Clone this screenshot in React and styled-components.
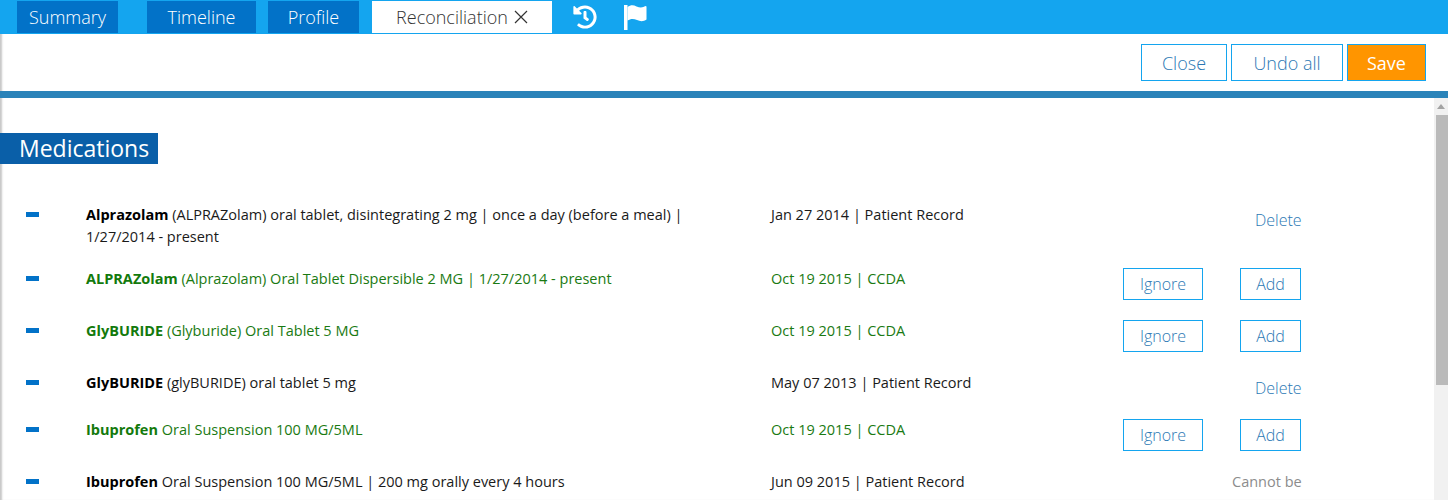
import React from "react";
import styled, { createGlobalStyle } from "styled-components";
import { FaHistory } from "react-icons/fa";

const GlobalStyle = createGlobalStyle`
  html, body {
    margin: 0;
    height: 500px;
    overflow: hidden;
    background: #fff;
    font-family: "Open Sans", "Liberation Sans", sans-serif;
  }
`;

const Page = styled.div`
  width: 1448px;
  height: 500px;
  overflow: hidden;
  display: flex;
  flex-direction: column;
  background: #fff;
  box-shadow: inset 3px 0 2px -1px #c8c8c8;
`;

const TopBar = styled.div`
  height: 34px;
  flex: none;
  background: #14a5ef;
  display: flex;
  align-items: flex-start;
  padding: 1px 0 0 17px;
  box-sizing: border-box;
`;

const Tab = styled.div`
  width: ${(p) => p.$width}px;
  height: 32px;
  margin-right: ${(p) => p.$gap}px;
  background: #0272c8;
  color: #fff;
  font-weight: 300;
  font-size: 18px;
  line-height: 32px;
  text-align: center;
`;

const ActiveTab = styled.div`
  width: 180px;
  height: 32px;
  margin-right: 21px;
  background: #fff;
  color: #333;
  font-weight: 300;
  font-size: 18px;
  line-height: 33px;
  display: flex;
  align-items: center;
  justify-content: center;
  gap: 6px;
`;

const IconButton = styled.div`
  height: 32px;
  margin-right: ${(p) => p.$gap || 0}px;
  display: flex;
  align-items: center;
  color: #fff;
`;

const Toolbar = styled.div`
  height: 57px;
  flex: none;
  display: flex;
  justify-content: flex-end;
  align-items: flex-start;
  gap: 4px;
  padding: 10px 22px 0 0;
  box-sizing: border-box;
  border-bottom: 0;
`;

const ToolButton = styled.button`
  height: 37px;
  width: ${(p) => p.$width}px;
  padding: 0;
  box-sizing: border-box;
  border: 1px solid #14a5ef;
  background: ${(p) => (p.$primary ? "#ff9500" : "#fff")};
  color: ${(p) => (p.$primary ? "#fff" : "#2b78b4")};
  font-family: inherit;
  font-weight: ${(p) => (p.$primary ? 400 : 300)};
  font-size: 18px;
`;

const Divider = styled.div`
  height: 7px;
  flex: none;
  background: #2a83b9;
`;

const Body = styled.div`
  flex: 1;
  min-height: 0;
  display: flex;
`;

const Content = styled.div`
  flex: 1;
  overflow: hidden;
  padding-top: 35px;
`;

const Heading = styled.h2`
  width: 158px;
  height: 31px;
  margin: 0 0 40px;
  padding-left: 19px;
  box-sizing: border-box;
  background: #0a5fa8;
  color: #fff;
  font-weight: 400;
  font-size: 23px;
  line-height: 31px;
`;

const Row = styled.div`
  display: grid;
  grid-template-columns: 86px 685px 352px 117px 1fr;
  padding-bottom: 20px;
  font-size: 14.5px;
  line-height: 22px;
  color: ${(p) => (p.$incoming ? "#1a7a12" : "#1a1a1a")};
`;

const MinusCell = styled.div`
  padding: 8px 0 0 26px;
`;

const Minus = styled.div`
  width: 13px;
  height: 5px;
  background: #0272c8;
`;

const Description = styled.div`
  padding-right: 30px;
`;

const Name = styled.strong`
  font-weight: 700;
  color: ${(p) => (p.$incoming ? "#137a0c" : "#000")};
`;

const ActionButton = styled.button`
  height: 32px;
  width: ${(p) => p.$width}px;
  padding: 0;
  box-sizing: border-box;
  border: 1px solid #14a5ef;
  background: #fff;
  color: #2b78b4;
  font-family: inherit;
  font-weight: 300;
  font-size: 16px;
`;

const DeleteLink = styled.a`
  display: block;
  padding: 5px 0 0 15px;
  color: #2b78b4;
  font-weight: 300;
  font-size: 16px;
`;

const Disabled = styled.div`
  color: #8c8c8c;
  font-size: 14.5px;
  padding-left: -8px;
  margin-left: -8px;
`;

const ScrollTrack = styled.div`
  width: 14px;
  flex: none;
  background: #f1f1f1;
  display: flex;
  flex-direction: column;
  align-items: flex-end;
`;

const ScrollArrow = styled.div`
  height: 17px;
  width: 14px;
  display: flex;
  align-items: center;
  justify-content: center;
`;

const ScrollThumb = styled.div`
  width: 12px;
  height: 270px;
  background: #bababa;
`;

const FlagIcon = () => (
  <svg width="24" height="26" viewBox="0 0 24 26" fill="currentColor">
    <path d="M0 1h3.5v25H0z" />
    <path d="M3.5 3c3-2.2 6-2.2 9 -.6 3.5 1.6 6.5 1.3 9-.4l1 .5v13c-2.8 2-6 2.2-9.5.5-3.5-1.6-6.5-1.4-9.5.5z" />
  </svg>
);

const CloseIcon = () => (
  <svg width="14" height="14" viewBox="0 0 14 14" stroke="#333" strokeWidth="1.2" fill="none">
    <path d="M1 1l12 12M13 1L1 13" />
  </svg>
);

const meds = [
  {
    name: "Alprazolam",
    rest: " (ALPRAZolam) oral tablet, disintegrating 2 mg | once a day (before a meal) | 1/27/2014 - present",
    date: "Jan 27 2014 | Patient Record",
    action: "delete",
  },
  {
    name: "ALPRAZolam",
    rest: " (Alprazolam) Oral Tablet Dispersible 2 MG | 1/27/2014 - present",
    date: "Oct 19 2015 | CCDA",
    incoming: true,
  },
  {
    name: "GlyBURIDE",
    rest: " (Glyburide) Oral Tablet 5 MG",
    date: "Oct 19 2015 | CCDA",
    incoming: true,
  },
  {
    name: "GlyBURIDE",
    rest: " (glyBURIDE) oral tablet 5 mg",
    date: "May 07 2013 | Patient Record",
    action: "delete",
  },
  {
    name: "Ibuprofen",
    rest: " Oral Suspension 100 MG/5ML",
    date: "Oct 19 2015 | CCDA",
    incoming: true,
  },
  {
    name: "Ibuprofen",
    rest: " Oral Suspension 100 MG/5ML | 200 mg orally every 4 hours",
    date: "Jun 09 2015 | Patient Record",
    action: "none",
  },
];

const App = () => {
  return (
    <Page>
      <GlobalStyle />
      <TopBar>
        <Tab $width={101} $gap={29}>Summary</Tab>
        <Tab $width={109} $gap={12}>Timeline</Tab>
        <Tab $width={91} $gap={13}>Profile</Tab>
        <ActiveTab>
          Reconciliation <CloseIcon />
        </ActiveTab>
        <IconButton $gap={27}>
          <FaHistory size={24} />
        </IconButton>
        <IconButton>
          <FlagIcon />
        </IconButton>
      </TopBar>
      <Toolbar>
        <ToolButton $width={86}>Close</ToolButton>
        <ToolButton $width={112}>Undo all</ToolButton>
        <ToolButton $width={79} $primary>Save</ToolButton>
      </Toolbar>
      <Divider />
      <Body>
        <Content>
          <Heading>Medications</Heading>
          {meds.map((med, i) => (
            <Row key={i} $incoming={med.incoming}>
              <MinusCell>
                <Minus />
              </MinusCell>
              <Description>
                <Name $incoming={med.incoming}>{med.name}</Name>
                {med.rest}
              </Description>
              <div>{med.date}</div>
              <div>{med.incoming && <ActionButton $width={80}>Ignore</ActionButton>}</div>
              <div>
                {med.incoming && <ActionButton $width={61}>Add</ActionButton>}
                {med.action === "delete" && <DeleteLink>Delete</DeleteLink>}
                {med.action === "none" && <Disabled>Cannot be</Disabled>}
              </div>
            </Row>
          ))}
        </Content>
        <ScrollTrack>
          <ScrollArrow>
            <svg width="8" height="5" viewBox="0 0 8 5" fill="#a3a3a3">
              <path d="M4 0l4 5H0z" />
            </svg>
          </ScrollArrow>
          <ScrollThumb />
        </ScrollTrack>
      </Body>
    </Page>
  );
};

export default App;
